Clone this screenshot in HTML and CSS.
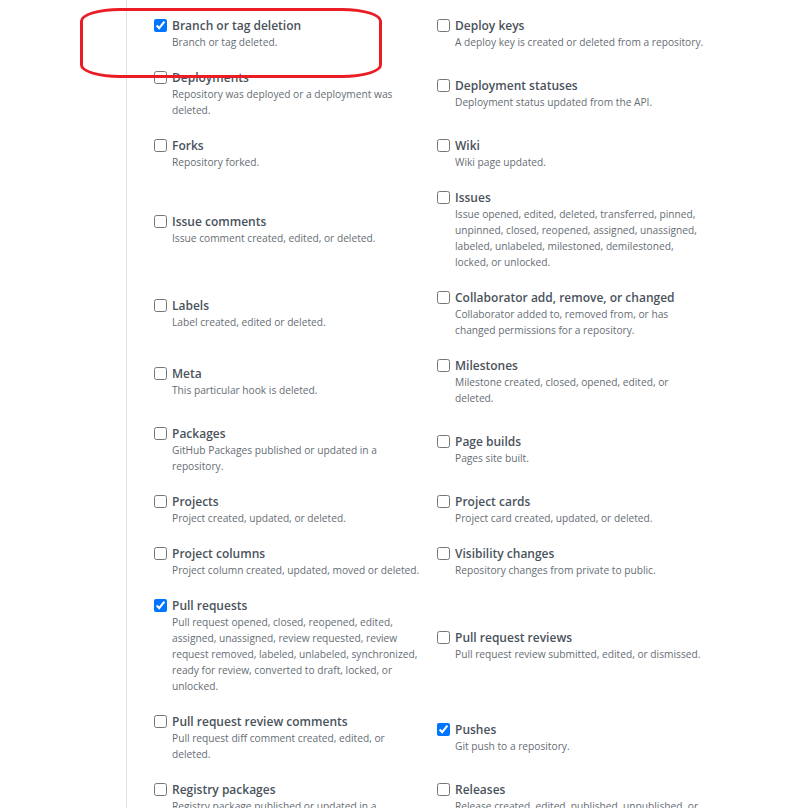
FILE: index.html
```html
<!DOCTYPE html>
<html lang="en">
<head>
<meta charset="utf-8">
<title>Webhook events</title>
<link rel="stylesheet" href="styles.css">
</head>
<body>
<div class="page">
  <div class="events">
    <div class="event"><input type="checkbox" checked><div class="text"><div class="title">Branch or tag deletion</div><div class="note">Branch or tag deleted.</div></div></div>
    <div class="event"><input type="checkbox"><div class="text"><div class="title">Deploy keys</div><div class="note">A deploy key is created or deleted from a repository.</div></div></div>

    <div class="event"><input type="checkbox"><div class="text"><div class="title">Deployments</div><div class="note">Repository was deployed or a deployment was<br>deleted.</div></div></div>
    <div class="event"><input type="checkbox"><div class="text"><div class="title">Deployment statuses</div><div class="note">Deployment status updated from the API.</div></div></div>

    <div class="event"><input type="checkbox"><div class="text"><div class="title">Forks</div><div class="note">Repository forked.</div></div></div>
    <div class="event"><input type="checkbox"><div class="text"><div class="title">Wiki</div><div class="note">Wiki page updated.</div></div></div>

    <div class="event"><input type="checkbox"><div class="text"><div class="title">Issue comments</div><div class="note">Issue comment created, edited, or deleted.</div></div></div>
    <div class="event"><input type="checkbox"><div class="text"><div class="title">Issues</div><div class="note">Issue opened, edited, deleted, transferred, pinned,<br>unpinned, closed, reopened, assigned, unassigned,<br>labeled, unlabeled, milestoned, demilestoned,<br>locked, or unlocked.</div></div></div>

    <div class="event"><input type="checkbox"><div class="text"><div class="title">Labels</div><div class="note">Label created, edited or deleted.</div></div></div>
    <div class="event"><input type="checkbox"><div class="text"><div class="title">Collaborator add, remove, or changed</div><div class="note">Collaborator added to, removed from, or has<br>changed permissions for a repository.</div></div></div>

    <div class="event"><input type="checkbox"><div class="text"><div class="title">Meta</div><div class="note">This particular hook is deleted.</div></div></div>
    <div class="event"><input type="checkbox"><div class="text"><div class="title">Milestones</div><div class="note">Milestone created, closed, opened, edited, or<br>deleted.</div></div></div>

    <div class="event"><input type="checkbox"><div class="text"><div class="title">Packages</div><div class="note">GitHub Packages published or updated in a<br>repository.</div></div></div>
    <div class="event"><input type="checkbox"><div class="text"><div class="title">Page builds</div><div class="note">Pages site built.</div></div></div>

    <div class="event"><input type="checkbox"><div class="text"><div class="title">Projects</div><div class="note">Project created, updated, or deleted.</div></div></div>
    <div class="event"><input type="checkbox"><div class="text"><div class="title">Project cards</div><div class="note">Project card created, updated, or deleted.</div></div></div>

    <div class="event"><input type="checkbox"><div class="text"><div class="title">Project columns</div><div class="note">Project column created, updated, moved or deleted.</div></div></div>
    <div class="event"><input type="checkbox"><div class="text"><div class="title">Visibility changes</div><div class="note">Repository changes from private to public.</div></div></div>

    <div class="event"><input type="checkbox" checked><div class="text"><div class="title">Pull requests</div><div class="note">Pull request opened, closed, reopened, edited,<br>assigned, unassigned, review requested, review<br>request removed, labeled, unlabeled, synchronized,<br>ready for review, converted to draft, locked, or<br>unlocked.</div></div></div>
    <div class="event"><input type="checkbox"><div class="text"><div class="title">Pull request reviews</div><div class="note">Pull request review submitted, edited, or dismissed.</div></div></div>

    <div class="event"><input type="checkbox"><div class="text"><div class="title">Pull request review comments</div><div class="note">Pull request diff comment created, edited, or<br>deleted.</div></div></div>
    <div class="event"><input type="checkbox" checked><div class="text"><div class="title">Pushes</div><div class="note">Git push to a repository.</div></div></div>

    <div class="event"><input type="checkbox"><div class="text"><div class="title">Registry packages</div><div class="note">Registry package published or updated in a<br>repository.</div></div></div>
    <div class="event"><input type="checkbox"><div class="text"><div class="title">Releases</div><div class="note">Release created, edited, published, unpublished, or<br>deleted.</div></div></div>
  </div>
</div>
<div class="highlight"></div>
</body>
</html>
```

FILE: styles.css
```css
html, body {
  margin: 0;
  padding: 0;
  background: #ffffff;
  overflow: hidden;
}

body {
  font-family: "Open Sans", "Noto Sans", sans-serif;
  color: #4a535c;
  position: relative;
  height: 808px;
}

.page {
  margin-left: 126px;
  border-left: 1px solid #dfe2e5;
  padding-left: 27px;
  padding-top: 17px;
  min-height: 808px;
  box-sizing: border-box;
}

.events {
  display: grid;
  grid-template-columns: 283px 283px;
  row-gap: 19px;
  align-items: center;
}

.event {
  display: flex;
  align-items: flex-start;
  gap: 5px;
}

.event input {
  margin: 2px 0 0 0;
  width: 13px;
  height: 13px;
  flex: none;
}

.title {
  font-size: 12px;
  font-weight: 600;
  line-height: 17px;
  color: #4a535c;
  white-space: nowrap;
}

.note {
  font-size: 10.2px;
  line-height: 16px;
  color: #666d74;
  white-space: nowrap;
}

.highlight {
  position: absolute;
  left: 80px;
  top: 8px;
  width: 296px;
  height: 64px;
  border: 3px solid #ea1c24;
  border-radius: 40px / 13px;
}
```
